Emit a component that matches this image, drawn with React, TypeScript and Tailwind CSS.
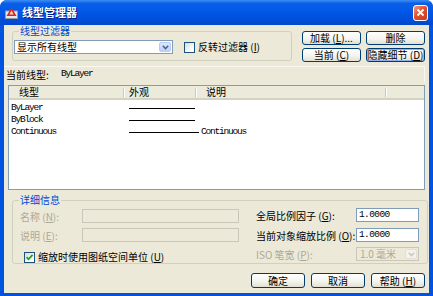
import React from "react";

const cjk = "font-['Noto_Sans_CJK_SC','Noto_Sans',sans-serif]";
const mono = "font-['Liberation_Mono',monospace]";

function U({ children }: { children: React.ReactNode }) {
  return <span className="underline underline-offset-1">{children}</span>;
}

function Btn({
  children,
  w,
  h,
  focused,
}: {
  children: React.ReactNode;
  w: string;
  h: string;
  focused?: boolean;
}) {
  return (
    <div
      className={`flex items-center justify-center ${w} ${h} rounded-[3px] border border-[#003C74] bg-[linear-gradient(180deg,#ffffff_0%,#f5f4ef_55%,#e3e0d2_100%)] text-[10px] leading-none text-black ${
        focused ? "shadow-[inset_0_0_0_1px_#8FB0EA]" : ""
      }`}
    >
      {children}
    </div>
  );
}

function CheckBox({ checked }: { checked?: boolean }) {
  return (
    <div className="flex h-[11px] w-[11px] items-center justify-center border border-[#1C5180] bg-[linear-gradient(135deg,#dcdcd6_0%,#ffffff_80%)]">
      {checked && (
        <svg width="9" height="9" viewBox="0 0 9 9">
          <path d="M1.5 4.2 L3.5 6.3 L7.6 1.8" stroke="#21A121" strokeWidth="1.8" fill="none" />
        </svg>
      )}
    </div>
  );
}

function DropArrow({ disabled }: { disabled?: boolean }) {
  return (
    <div
      className={`flex h-full w-[12px] items-center justify-center rounded-[2px] border ${
        disabled
          ? "border-[#E2E0D6] bg-[#F3F2EC]"
          : "border-[#B9CCF5] bg-[linear-gradient(180deg,#DDE8FE_0%,#BCD0FA_100%)]"
      }`}
    >
      <svg width="7" height="5" viewBox="0 0 7 5">
        <path
          d="M0.8 0.8 L3.5 3.6 L6.2 0.8"
          stroke={disabled ? "#C9C7BA" : "#4D6185"}
          strokeWidth="1.5"
          fill="none"
        />
      </svg>
    </div>
  );
}

function HeaderSep() {
  return <div className="h-[9px] w-[2px] border-l border-r border-l-[#CBC7B8] border-r-white" />;
}

export default function App() {
  return (
    <div className={`flex h-[296px] w-[433px] flex-col overflow-hidden rounded-t-[7px] bg-[#0053E1] ${cjk}`}>
      {/* title bar */}
      <div className="flex h-[25px] shrink-0 items-center bg-[linear-gradient(180deg,#3C8EF3_0%,#0A5FE9_14%,#0055E5_55%,#0048CF_100%)] pl-[5px] pr-[5px]">
        <svg width="13" height="12" viewBox="0 0 13 12">
          <rect x="0.5" y="4" width="12" height="7.5" fill="#E8E8E8" stroke="#9A9A9A" />
          <path d="M6.5 0.5 L11.5 9 L1.5 9 Z" fill="#D42A1E" />
          <path d="M6.5 3.5 L8.6 7.4 L4.4 7.4 Z" fill="#F8D0C8" />
        </svg>
        <span className="ml-[4px] text-[11px] font-bold text-white [text-shadow:1px_1px_0_#0A1883]">
          线型管理器
        </span>
        <div className="ml-auto flex h-[16px] w-[15px] items-center justify-center rounded-[3px] border border-white bg-[linear-gradient(135deg,#F19A7E_0%,#E2512F_45%,#C83A1A_100%)]">
          <svg width="9" height="9" viewBox="0 0 9 9">
            <path d="M1.5 1.5 L7.5 7.5 M7.5 1.5 L1.5 7.5" stroke="white" strokeWidth="1.8" />
          </svg>
        </div>
      </div>

      {/* body */}
      <div className="mx-[4px] mb-[3px] flex flex-1 flex-col bg-[#ECE9D8] text-[10px] text-black">
        {/* top row */}
        <div className="flex h-[36px] shrink-0">
          <fieldset className="ml-[8px] h-[36px] w-[280px] rounded-[3px] border border-[#D0D0BF]">
            <legend className="ml-[6px] px-[1px] text-[10px] leading-[12px] text-[#0046D5]">线型过滤器</legend>
            <div className="flex items-center pl-[1px] pt-[3px]">
              <div className="flex h-[14px] w-[159px] items-center border border-[#7F9DB9] bg-white p-[1px]">
                <span className="flex-1 pl-[1px] leading-none">显示所有线型</span>
                <DropArrow />
              </div>
              <div className="ml-[11px]">
                <CheckBox />
              </div>
              <span className="ml-[3px] leading-none">
                反转过滤器 (<U>I</U>)
              </span>
            </div>
          </fieldset>
          <div className="ml-[10px] grid grid-cols-[59px_59px] gap-x-[5px] gap-y-[3px] pt-[6px]">
            <Btn w="w-[59px]" h="h-[14px]">
              加载 (<U>L</U>)...
            </Btn>
            <Btn w="w-[59px]" h="h-[14px]">
              删除
            </Btn>
            <Btn w="w-[59px]" h="h-[14px]">
              当前 (<U>C</U>)
            </Btn>
            <Btn w="w-[59px]" h="h-[14px]" focused>
              隐藏细节 (<U>D</U>)
            </Btn>
          </div>
        </div>

        {/* current linetype */}
        <div className="mr-[4px] mt-[5px] flex h-[16px] shrink-0 items-center border-r border-t border-[#F9F8F3] pl-[2px]">
          <span className="w-[55px]">当前线型:</span>
          <span className={`${mono} text-[9.5px] tracking-[-1.2px]`}>ByLayer</span>
        </div>

        {/* list */}
        <div className="ml-[4px] mt-[3px] h-[105px] w-[417px] shrink-0 border border-[#7F9DB9] bg-white">
          <div className="flex h-[14px] items-center border-b-2 border-[#D6D2C2] bg-[#EBEADB] leading-none">
            <span className="w-[114px] pl-[10px]">线型</span>
            <HeaderSep />
            <span className="w-[70px] pl-[4px]">外观</span>
            <HeaderSep />
            <span className="w-[188px] pl-[9px]">说明</span>
            <HeaderSep />
          </div>
          <div className={`${mono} mt-[2px] text-[9.5px] leading-none tracking-[-1.2px]`}>
            <div className="flex h-[12px] items-center">
              <span className="w-[115px] pl-[2px]">ByLayer</span>
              <div className="ml-[5px] h-[1px] w-[66px] bg-black" />
            </div>
            <div className="flex h-[12px] items-center">
              <span className="w-[115px] pl-[2px]">ByBlock</span>
              <div className="ml-[5px] h-[1px] w-[66px] bg-black" />
            </div>
            <div className="flex h-[12px] items-center">
              <span className="w-[115px] pl-[2px]">Continuous</span>
              <div className="ml-[5px] h-[1px] w-[70px] bg-black" />
              <span className="ml-[2px]">Continuous</span>
            </div>
          </div>
        </div>

        {/* details */}
        <fieldset className="ml-[8px] mt-[4px] h-[70px] w-[416px] shrink-0 rounded-[3px] border border-[#D0D0BF]">
          <legend className="ml-[6px] px-[1px] text-[10px] leading-[12px] text-[#0046D5]">详细信息</legend>
          <div className="flex">
            <div className="flex flex-col pl-[7px] pt-[3px]">
              <div className="flex h-[14px] items-center">
                <span className="w-[62px] text-[#ACA899]">
                  名称 (<U>N</U>):
                </span>
                <div className="h-[14px] w-[157px] border border-[#C9C7BA] bg-[#ECE9D8]" />
              </div>
              <div className="mt-[5px] flex h-[14px] items-center">
                <span className="w-[62px] text-[#ACA899]">
                  说明 (<U>E</U>):
                </span>
                <div className="h-[14px] w-[157px] border border-[#C9C7BA] bg-[#ECE9D8]" />
              </div>
              <div className="ml-[4px] mt-[9px] flex h-[12px] items-center">
                <CheckBox checked />
                <span className="ml-[3px] leading-none">
                  缩放时使用图纸空间单位 (<U>U</U>)
                </span>
              </div>
            </div>
            <div className="ml-[17px] flex flex-col pt-[2px]">
              <div className="flex h-[14px] items-center">
                <span className="w-[100px]">
                  全局比例因子 (<U>G</U>):
                </span>
                <div className={`flex h-[14px] w-[63px] items-center border border-[#7F9DB9] bg-white pl-[2px] ${mono} text-[9.5px] tracking-[-0.6px]`}>
                  1.0000
                </div>
              </div>
              <div className="mt-[6px] flex h-[14px] items-center">
                <span className="w-[100px]">
                  当前对象缩放比例 (<U>O</U>):
                </span>
                <div className={`flex h-[14px] w-[63px] items-center border border-[#7F9DB9] bg-white pl-[2px] ${mono} text-[9.5px] tracking-[-0.6px]`}>
                  1.0000
                </div>
              </div>
              <div className="mt-[5px] flex h-[14px] items-center">
                <span className="w-[100px] text-[#ACA899]">
                  ISO 笔宽 (<U>P</U>):
                </span>
                <div className="flex h-[14px] w-[63px] items-center border border-[#C9C7BA] bg-[#ECE9D8] p-[1px] text-[#ACA899]">
                  <span className="flex-1 pl-[2px] leading-none">1.0 毫米</span>
                  <DropArrow disabled />
                </div>
              </div>
            </div>
          </div>
        </fieldset>

        {/* bottom buttons */}
        <div className="mr-[4px] mt-[9px] flex justify-end gap-[6px]">
          <Btn w="w-[54px]" h="h-[15px]">
            确定
          </Btn>
          <Btn w="w-[54px]" h="h-[15px]">
            取消
          </Btn>
          <Btn w="w-[54px]" h="h-[15px]">
            帮助 (<U>H</U>)
          </Btn>
        </div>
      </div>
    </div>
  );
}
